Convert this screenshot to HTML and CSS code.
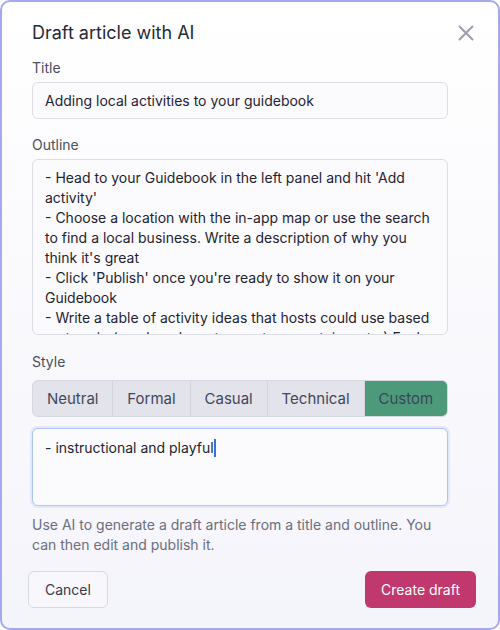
FILE: index.html
```html
<!DOCTYPE html>
<html>

<head>
    <meta name="viewport" content="width=device-width, initial-scale=1.0">
    <title>Draft article with AI</title>
    <link rel="stylesheet" href="styles.css">
</head>

<body>
    <div class="dialog">
        <div class="dialog-header">
            <h1 class="dialog-title">Draft article with AI</h1>
            <button class="close-btn" aria-label="Close">
                <svg width="16" height="16" viewBox="0 0 16 16">
                    <path d="M1.5 1.5 L14.5 14.5 M14.5 1.5 L1.5 14.5" stroke="#9a9cac" stroke-width="1.9" stroke-linecap="round" fill="none" />
                </svg>
            </button>
        </div>

        <div class="field">
            <label class="label">Title</label>
            <div class="input">Adding local activities to your guidebook</div>
        </div>

        <div class="field field-outline">
            <label class="label">Outline</label>
            <div class="textarea outline">- Head to your Guidebook in the left panel and hit 'Add activity'<br>- Choose a location with the in-app map or use the search to find a local business. Write a description of why you think it's great<br>- Click 'Publish' once you're ready to show it on your Guidebook<br>- Write a table of activity ideas that hosts could use based on terrain (e.g. beach, watersports, mountains, etc.) Feel free to add more</div>
        </div>

        <div class="field field-style">
            <label class="label">Style</label>
            <div class="segments">
                <button class="segment">Neutral</button>
                <button class="segment">Formal</button>
                <button class="segment">Casual</button>
                <button class="segment">Technical</button>
                <button class="segment active">Custom</button>
            </div>
            <div class="textarea custom">- instructional and playful<span class="caret"></span></div>
        </div>

        <p class="help">Use AI to generate a draft article from a title and outline. You can then edit and publish it.</p>

        <div class="dialog-footer">
            <button class="btn btn-cancel">Cancel</button>
            <button class="btn btn-primary">Create draft</button>
        </div>
    </div>
</body>

</html>
```

FILE: styles.css
```css
body {
    margin: 0;
    font-family: Inter, "Noto Sans", sans-serif;
    color: #1f2330;
}

.dialog {
    box-sizing: border-box;
    width: 500px;
    height: 630px;
    border: 2px solid #a6a8f1;
    border-radius: 10px;
    background: linear-gradient(to bottom, #ffffff, #f4f4fb);
    padding: 19px 22px 0 26px;
}

.dialog-header {
    display: flex;
    justify-content: space-between;
    align-items: center;
    padding-left: 4px;
    height: 24px;
}

.dialog-title {
    margin: 0;
    font-size: 18px;
    font-weight: 400;
    line-height: 24px;
    color: #262a36;
}

.close-btn {
    background: none;
    border: none;
    padding: 0;
    margin-right: 2px;
    display: flex;
}

.field {
    margin-left: 4px;
    width: 416px;
    margin-top: 13px;
}

.field-outline {
    margin-top: 16px;
}

.field-style {
    margin-top: 17px;
}

.label {
    display: block;
    font-size: 14px;
    line-height: 20px;
    color: #4a4f5f;
    margin-bottom: 4px;
}

.field-style .label {
    margin-bottom: 8px;
}

.input,
.textarea {
    box-sizing: border-box;
    border: 1px solid #dcdde5;
    border-radius: 6px;
    background: #fbfbfe;
    font-size: 14px;
    line-height: 20px;
    padding: 0 12px;
    color: #1f2330;
}

.input {
    height: 37px;
    line-height: 35px;
}

.outline {
    height: 176px;
    overflow: hidden;
    padding-top: 8px;
}

.segments {
    display: flex;
    height: 37px;
    border: 1px solid #d6d7df;
    border-radius: 6px;
    overflow: hidden;
    background: #e2e3eb;
    box-sizing: border-box;
}

.segment {
    flex: 1 1 auto;
    border: none;
    border-left: 1px solid #d3d4dc;
    background: none;
    font-family: inherit;
    font-size: 15px;
    color: #424859;
    padding: 0 12px;
}

.segment:first-child {
    border-left: none;
}

.segment.active {
    background: #4c9a7a;
    color: #384757;
}

.custom {
    margin-top: 11px;
    height: 78px;
    padding-top: 9px;
    border-color: #adc4f6;
    box-shadow: 0 0 0 2px rgba(160, 190, 248, 0.25);
}

.caret {
    display: inline-block;
    width: 2px;
    height: 18px;
    background: #3a6fe2;
    vertical-align: -4px;
}

.help {
    margin: 9px 0 0 4px;
    width: 416px;
    font-size: 14px;
    line-height: 20px;
    color: #6a6e7e;
}

.dialog-footer {
    display: flex;
    justify-content: space-between;
    margin-top: 16px;
}

.btn {
    height: 37px;
    border-radius: 6px;
    font-family: inherit;
    font-size: 14px;
    padding: 0 16px;
}

.btn-cancel {
    background: #f7f7fc;
    border: 1px solid #d8d9e1;
    color: #363b4b;
}

.btn-primary {
    background: #c0386d;
    border: none;
    color: #ffffff;
}
```
